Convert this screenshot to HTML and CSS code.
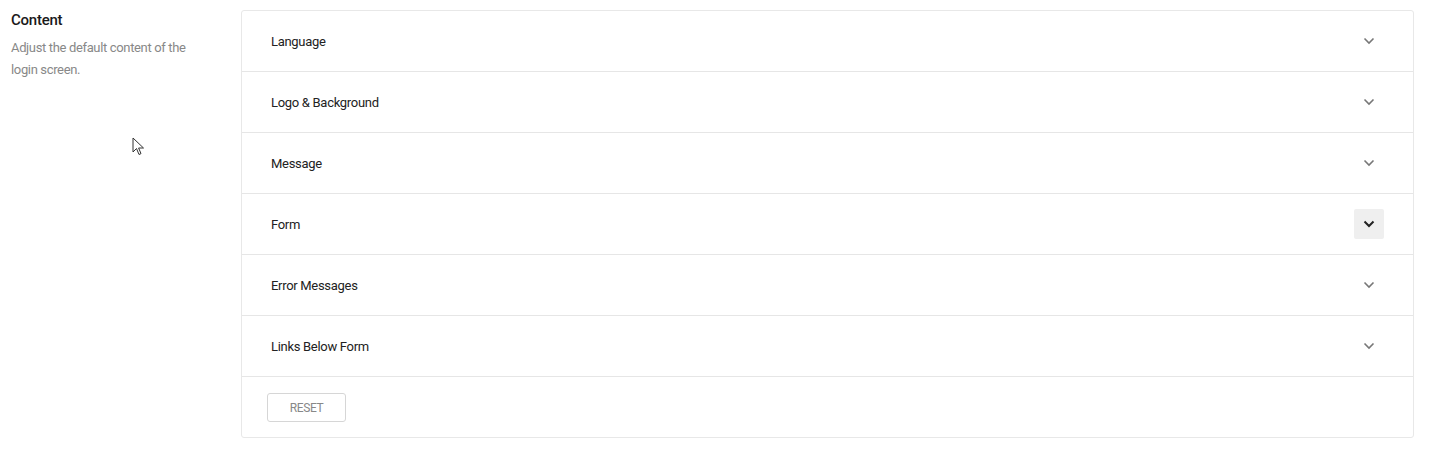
FILE: index.html
```html
<!DOCTYPE html>
<html>
<head>
<meta charset="utf-8">
<link rel="stylesheet" href="styles.css">
</head>
<body>
<div class="page">
  <aside class="intro">
    <h2 class="intro-title">Content</h2>
    <p class="intro-desc">Adjust the default content of the login screen.</p>
  </aside>
  <section class="card">
    <div class="row"><span class="row-label">Language</span><span class="chev"><svg width="12" height="8" viewBox="0 0 12 8"><path d="M1.5 1.5 6 6 10.5 1.5" fill="none" stroke="#777" stroke-width="1.6"/></svg></span></div>
    <div class="row"><span class="row-label">Logo &amp; Background</span><span class="chev"><svg width="12" height="8" viewBox="0 0 12 8"><path d="M1.5 1.5 6 6 10.5 1.5" fill="none" stroke="#777" stroke-width="1.6"/></svg></span></div>
    <div class="row"><span class="row-label">Message</span><span class="chev"><svg width="12" height="8" viewBox="0 0 12 8"><path d="M1.5 1.5 6 6 10.5 1.5" fill="none" stroke="#777" stroke-width="1.6"/></svg></span></div>
    <div class="row"><span class="row-label">Form</span><span class="chev chev-hover"><svg width="12" height="8" viewBox="0 0 12 8"><path d="M1.5 1.5 6 6 10.5 1.5" fill="none" stroke="#222" stroke-width="2"/></svg></span></div>
    <div class="row"><span class="row-label">Error Messages</span><span class="chev"><svg width="12" height="8" viewBox="0 0 12 8"><path d="M1.5 1.5 6 6 10.5 1.5" fill="none" stroke="#777" stroke-width="1.6"/></svg></span></div>
    <div class="row"><span class="row-label">Links Below Form</span><span class="chev"><svg width="12" height="8" viewBox="0 0 12 8"><path d="M1.5 1.5 6 6 10.5 1.5" fill="none" stroke="#777" stroke-width="1.6"/></svg></span></div>
    <div class="footer"><button class="reset">RESET</button></div>
  </section>
</div>
<svg class="cursor" width="14" height="20" viewBox="0 0 14 20"><path d="M1 1 L1 15 L4.5 11.5 L7 17.5 L9 16.6 L6.6 11 L11.5 11 Z" fill="#fff" stroke="#333" stroke-width="1"/></svg>
</body>
</html>
```
FILE: styles.css
```css
* { box-sizing: border-box; }
html, body { margin: 0; padding: 0; background: #fff; }
body {
  font-family: Roboto, "Liberation Sans", Arial, sans-serif;
  color: #222;
  position: relative;
  width: 1430px;
  height: 454px;
  overflow: hidden;
}
.page {
  display: flex;
  padding: 10px 16px 0 11px;
}
.intro {
  width: 230px;
  flex: none;
  padding-top: 1px;
}
.intro-title {
  margin: 0;
  font-size: 15px;
  font-weight: 500;
  line-height: 18px;
  color: #1a1a1a;
  letter-spacing: -0.25px;
}
.intro-desc {
  margin: 8px 0 0;
  width: 190px;
  font-size: 13px;
  line-height: 22px;
  color: #888;
  letter-spacing: -0.35px;
}
.card {
  width: 1173px;
  border: 1px solid #e8e8e8;
  border-radius: 3px;
  display: flex;
  flex-direction: column;
}
.row {
  height: 61px;
  border-bottom: 1px solid #e6e6e6;
  display: flex;
  align-items: center;
  justify-content: space-between;
  padding: 0 28px 0 29px;
}
.row-label {
  font-size: 13px;
  color: #222;
  letter-spacing: -0.3px;
  padding-top: 0;
}
.chev {
  width: 30px;
  height: 30px;
  margin-right: 1px;
  display: flex;
  align-items: center;
  justify-content: center;
  border-radius: 2px;
}
.chev-hover { background: #efefef; }
.footer {
  height: 60px;
  display: flex;
  align-items: center;
  padding-left: 25px;
}
.reset {
  width: 79px;
  height: 29px;
  border: 1px solid #d6d6d6;
  border-radius: 3px;
  background: #fff;
  font-family: Roboto, "Liberation Sans", Arial, sans-serif;
  font-size: 12px;
  color: #888;
  letter-spacing: -0.4px;
  padding: 1px 0 0;
}
.cursor {
  position: absolute;
  left: 132px;
  top: 137px;
}
```
